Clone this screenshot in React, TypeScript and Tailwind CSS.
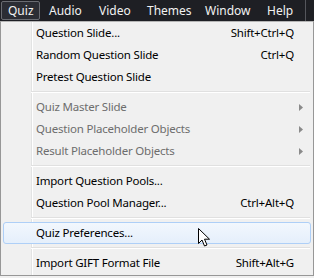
import React from "react";

type Item =
  | { kind: "item"; label: string; shortcut?: string; disabled?: boolean; sub?: boolean; hot?: boolean }
  | { kind: "sep" };

const ITEMS: Item[] = [
  { kind: "item", label: "Question Slide...", shortcut: "Shift+Ctrl+Q" },
  { kind: "item", label: "Random Question Slide", shortcut: "Ctrl+Q" },
  { kind: "item", label: "Pretest Question Slide" },
  { kind: "sep" },
  { kind: "item", label: "Quiz Master Slide", disabled: true, sub: true },
  { kind: "item", label: "Question Placeholder Objects", disabled: true, sub: true },
  { kind: "item", label: "Result Placeholder Objects", disabled: true, sub: true },
  { kind: "sep" },
  { kind: "item", label: "Import Question Pools..." },
  { kind: "item", label: "Question Pool Manager...", shortcut: "Ctrl+Alt+Q" },
  { kind: "sep" },
  { kind: "item", label: "Quiz Preferences...", hot: true },
  { kind: "sep" },
  { kind: "item", label: "Import GIFT Format File", shortcut: "Shift+Alt+G" },
];

const BAR = [
  { label: "Quiz", w: "w-[39px] mr-[3px]", active: true },
  { label: "Audio", w: "w-[50px]" },
  { label: "Video", w: "w-[48px]" },
  { label: "Themes", w: "w-[58px]" },
  { label: "Window", w: "w-[62px]" },
  { label: "Help", w: "w-[40px]" },
];

function Cursor() {
  return (
    <svg className="absolute left-[198px] top-[228px]" width="13" height="20" viewBox="0 0 13 20">
      <path d="M0.5 0.5 L0.5 15.5 L4 12 L6.5 18 L9 17 L6.5 11.2 L11.5 11.2 Z" fill="#ffffff" stroke="#000000" strokeWidth="1" />
    </svg>
  );
}

export default function App() {
  return (
    <div className="relative w-[314px] h-[278px] overflow-hidden bg-[#f0f0f0] font-['Segoe_UI','Noto_Sans',sans-serif] text-[11.5px] tracking-[-0.2px]">
      {/* menu bar */}
      <div className="h-[21px] bg-[#1e1f24] flex items-center text-[#f2f2f2] text-[12px] tracking-normal">
        <div className="flex items-center ml-[1px]">
          {BAR.map((b) => (
            <div
              key={b.label}
              className={`${b.w} h-[19px] pl-[6px] flex items-center leading-none ${
                b.active ? "border border-[#6a6c72] bg-[#2b2d34] rounded-[2px]" : ""
              }`}
            >
              {b.label}
            </div>
          ))}
        </div>
        <div className="ml-auto mr-[8px] w-px h-[21px] bg-[#55565c]" />
      </div>

      {/* dropdown */}
      <div className="relative w-[314px] h-[255px] border border-[#979797] border-t-[#b5b5b5] bg-[#f0f0f0]">
        <div className="absolute left-[30px] top-0 bottom-0 w-px bg-[#e2e3e3]" />
        <div className="absolute left-[31px] top-0 bottom-0 w-px bg-white" />
        <div className="relative flex flex-col px-[2px]">
          {ITEMS.map((it, i) =>
            it.kind === "sep" ? (
              <div key={i} className="h-[8px] flex flex-col justify-center pl-[28px] pr-[1px]">
                <div className="h-px bg-[#e0e0e0]" />
                <div className="h-px bg-white" />
              </div>
            ) : (
              <div
                key={i}
                className={`h-[22px] flex items-center pl-[32px] pr-[16px] rounded-[3px] ${
                  it.hot ? "border border-[#aecff7] bg-gradient-to-b from-[#f2f7fd] to-[#e5effb]" : "border border-transparent"
                } ${it.disabled ? "text-[#6d6d6d]" : "text-black"}`}
              >
                <span>{it.label}</span>
                <span className="ml-auto">{it.shortcut}</span>
                {it.sub && (
                  <svg width="4" height="7" viewBox="0 0 4 7" className="mr-[-9px]">
                    <path d="M0 0 L4 3.5 L0 7 Z" fill="#8a8a8a" />
                  </svg>
                )}
              </div>
            )
          )}
        </div>
      </div>
      <Cursor />
    </div>
  );
}
